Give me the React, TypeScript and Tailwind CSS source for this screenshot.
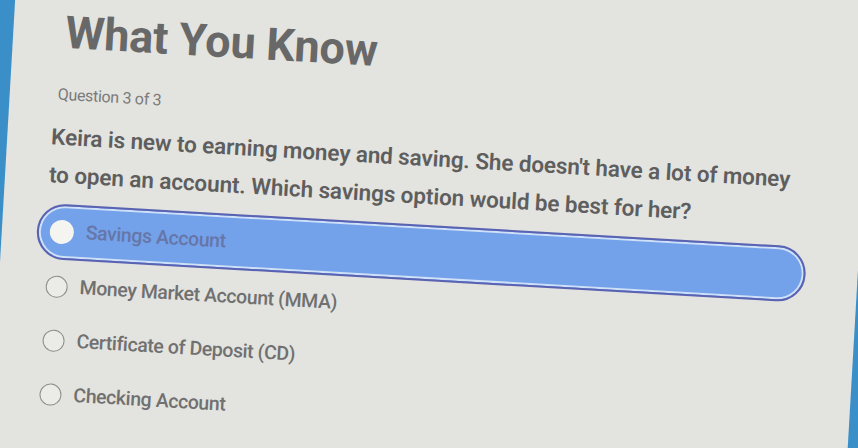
import React from "react";

const options = [
  "Savings Account",
  "Money Market Account (MMA)",
  "Certificate of Deposit (CD)",
  "Checking Account",
];

export default function App() {
  const selected = 0;

  return (
    <div className="h-[448px] w-[858px] overflow-hidden bg-[#3a8fc8] font-['Roboto',sans-serif]">
      {/* screen, tilted like the photo */}
      <div className="-mt-[50px] ml-[18px] h-[600px] w-[857px] origin-top-left rotate-[3.3deg] bg-[#e3e3df] pt-[57px]">
        <h1 className="pl-[52px] text-[45px] font-bold leading-[46px] tracking-[-0.2px] text-[#686868]">
          What You Know
        </h1>
        <p className="mt-[29px] pl-[48px] text-[16px] leading-[20px] tracking-[-0.3px] text-[#7a7a7a]">
          Question 3 of 3
        </p>
        <p className="mt-[13px] pl-[44px] text-[22.5px] font-semibold leading-[38px] tracking-[-0.1px] text-[#5e5e5e]">
          Keira is new to earning money and saving. She doesn't have a lot of money
          <br />
          to open an account. Which savings option would be best for her?
        </p>

        <ul className="ml-[35px] mt-[10px] w-[770px]">
          {options.map((label, i) => (
            <li
              key={label}
              className={
                i === selected
                  ? "flex h-[56px] items-center gap-3 rounded-full border-2 border-[#5a62b2] bg-[#73a2ea] pl-[11px] shadow-[inset_0_0_0_2px_#cfe0f7]"
                  : "flex h-[54px] items-center gap-3 pl-[12px]"
              }
            >
              <span
                className={
                  i === selected
                    ? "h-[24px] w-[24px] rounded-full bg-[#f4f4f0]"
                    : "h-[22px] w-[22px] rounded-full border-[1.5px] border-[#8e8e8c] bg-[#ebebe7]"
                }
              />
              <span
                className={
                  i === selected
                    ? "text-[19.5px] font-medium tracking-[-0.4px] text-[#6676a8]"
                    : "text-[19.5px] font-medium tracking-[-0.4px] text-[#707070]"
                }
              >
                {label}
              </span>
            </li>
          ))}
        </ul>
      </div>
    </div>
  );
}
